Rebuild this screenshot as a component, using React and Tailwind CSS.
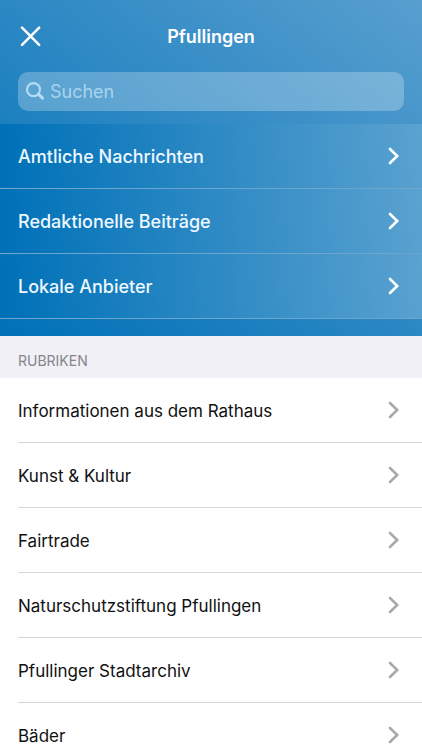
/**
 * App.jsx
 * Town menu: search, pinned sections on a blue gradient and the
 * scrollable list of categories below.
 */

// ---------------------------------------------------------------------------
// Data
// ---------------------------------------------------------------------------
const SECTIONS = ['Amtliche Nachrichten', 'Redaktionelle Beiträge', 'Lokale Anbieter'];

const CATEGORIES = [
  'Informationen aus dem Rathaus',
  'Kunst & Kultur',
  'Fairtrade',
  'Naturschutzstiftung Pfullingen',
  'Pfullinger Stadtarchiv',
  'Bäder',
];

// ---------------------------------------------------------------------------
// Icons
// ---------------------------------------------------------------------------
function CloseIcon() {
  return (
    <svg width="22" height="22" viewBox="0 0 22 22" fill="none" aria-hidden="true">
      <path
        d="M2 2.6 19.2 19.8M19.2 2.6 2 19.8"
        stroke="currentColor"
        strokeWidth="2.5"
        strokeLinecap="round"
      />
    </svg>
  );
}

function SearchIcon() {
  return (
    <svg width="20" height="20" viewBox="0 0 20 20" fill="none" aria-hidden="true">
      <circle cx="7.5" cy="7.6" r="6.5" stroke="currentColor" strokeWidth="2.1" />
      <path d="m12.4 12.2 4.2 4" stroke="currentColor" strokeWidth="3" strokeLinecap="round" />
    </svg>
  );
}

function ChevronIcon({ className }) {
  return (
    <svg
      width="12"
      height="18"
      viewBox="0 0 12 18"
      fill="none"
      className={className}
      aria-hidden="true"
    >
      <path
        d="m2 2 7.2 7L2 16"
        stroke="currentColor"
        strokeWidth="2.6"
        strokeLinecap="round"
        strokeLinejoin="miter"
      />
    </svg>
  );
}

// ---------------------------------------------------------------------------
// Rows
// ---------------------------------------------------------------------------
function SectionRow({ label }) {
  return (
    <li>
      <a
        href="#"
        className="flex h-[65px] items-center justify-between border-b border-[#6da6cc]
                   bg-[linear-gradient(84deg,#0071b8_2%,#5aa2d0_100%)] bg-origin-border pr-[22px] pl-[18px]
                   text-[18px] font-medium text-[#eef8ff]"
      >
        <span className="pt-[2px]">{label}</span>
        <ChevronIcon className="text-white" />
      </a>
    </li>
  );
}

function CategoryRow({ label }) {
  return (
    <li className="pl-[18px]">
      <a
        href="#"
        className="flex h-[65px] items-center justify-between border-b border-[#d6d6d6] pr-[22px]
                   text-[17px] text-[#111111]"
      >
        <span className="pt-[2px]">{label}</span>
        <ChevronIcon className="text-[#a9a9ab]" />
      </a>
    </li>
  );
}

// ---------------------------------------------------------------------------
// Main component
// ---------------------------------------------------------------------------
export default function App() {
  return (
    <div className="flex h-screen flex-col bg-white font-[Inter,sans-serif] leading-6">
      <div className="shrink-0 bg-[linear-gradient(to_top_right,#0071b8,#589fcf)] pb-[17px]">
        <header className="px-[18px] pb-[13px]">
          {/* Title bar */}
          <div className="grid h-[72px] grid-cols-[28px_1fr_28px] items-center">
            <button type="button" aria-label="Schließen" className="pl-[2px] text-white">
              <CloseIcon />
            </button>
            <h1 className="pt-[2px] text-center text-[18px] font-semibold text-white">Pfullingen</h1>
          </div>

          {/* Search */}
          <label className="flex h-[39px] items-center gap-1 rounded-[10px] bg-white/25 pr-3 pl-2 text-[#b5dcf4]">
            <SearchIcon />
            <input
              type="search"
              aria-label="Suchen"
              placeholder="Suchen"
              className="min-w-0 flex-1 bg-transparent text-[18px] outline-none placeholder:text-[#a9d3ee]"
            />
          </label>
        </header>

        <ul>
          {SECTIONS.map((label) => (
            <SectionRow key={label} label={label} />
          ))}
        </ul>
      </div>

      <h2 className="flex h-[42px] shrink-0 items-center bg-[#f1f0f6] px-[18px] pt-2 text-[14px] text-[#85858b]">
        RUBRIKEN
      </h2>
      <ul className="min-h-0 flex-1 overflow-y-auto [scrollbar-width:none]">
        {CATEGORIES.map((label) => (
          <CategoryRow key={label} label={label} />
        ))}
      </ul>
    </div>
  );
}
